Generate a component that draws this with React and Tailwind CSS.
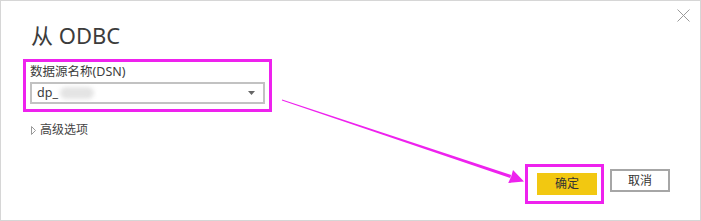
import React from 'react';

const font = { fontFamily: '"Noto Sans", "Noto Sans CJK SC", sans-serif' };

// 弹窗右上角关闭
const CloseIcon = () => (
  <svg width="13" height="13" viewBox="0 0 13 13" className="block">
    <path d="M0.5 0.5 L12.5 12.5 M12.5 0.5 L0.5 12.5" stroke="#9a9a9a" strokeWidth="1" fill="none" />
  </svg>
);

// 标注箭头
const Arrow = () => (
  <svg width="701" height="221" viewBox="0 0 701 221" className="absolute inset-0 pointer-events-none">
    <polygon points="280.9,99.4 281.1,98.6 510.2,174.1 509.2,176.9" fill="#ee22ee" />
    <polygon points="523,180.5 507.2,182 510.2,175.5 512,169" fill="#ee22ee" />
  </svg>
);

export default function App() {
  return (
    <div
      className="relative w-[701px] h-[221px] bg-white border border-[#d6d6d6] text-[#3c3c3c] overflow-hidden"
      style={font}
    >
      <button className="absolute top-[8px] right-[10px]">
        <CloseIcon />
      </button>

      <div className="pl-[22px] pt-[19px]">
        <h1 className="pl-[8px] text-[22px] leading-[30px] font-normal text-[#3c3c3c]">从 ODBC</h1>

        {/* DSN 选择 */}
        <div className="mt-[9px] w-[249px] border-[3px] border-[#ee22ee] px-[4px] pt-[1px] pb-[5px]">
          <div className="text-[12.5px] leading-[18px]">数据源名称(DSN)</div>
          <div className="mt-[1px] h-[22px] border-2 border-[#c2c2c2] flex items-center pl-[5px] pr-[8px]">
            <span className="text-[12.5px] leading-[18px]">dp_</span>
            <span className="ml-[2px] w-[34px] h-[12px] rounded-full bg-[#e4e4e4] blur-[2px]" />
            <span className="flex-1" />
            <svg width="7" height="4" viewBox="0 0 7 4">
              <polygon points="0,0 7,0 3.5,4" fill="#666" />
            </svg>
          </div>
        </div>

        {/* 高级选项 */}
        <div className="mt-[9px] pl-[8px] flex items-center gap-[4px] text-[12px] leading-[18px] text-[#444]">
          <svg width="5" height="9" viewBox="0 0 5 9">
            <polygon points="0.5,0.5 4.5,4.5 0.5,8.5" fill="none" stroke="#9a9a9a" strokeWidth="1" />
          </svg>
          <span>高级选项</span>
        </div>

        {/* 按钮 */}
        <div className="mt-[25px] pr-[30px] flex items-start justify-end gap-[6px]">
          <div className="border-[3px] border-[#ee22ee] pl-[9px] pr-[4px] pt-[3px] pb-[6px]">
            <button className="w-[60px] h-[22px] bg-[#f2c811] text-[12px] text-[#333] leading-[22px]">确定</button>
          </div>
          <button className="mt-[5px] w-[60px] h-[23px] border-2 border-[#a6a6a6] bg-white text-[12px] text-[#333] leading-[19px]">
            取消
          </button>
        </div>
      </div>

      <Arrow />
    </div>
  );
}
